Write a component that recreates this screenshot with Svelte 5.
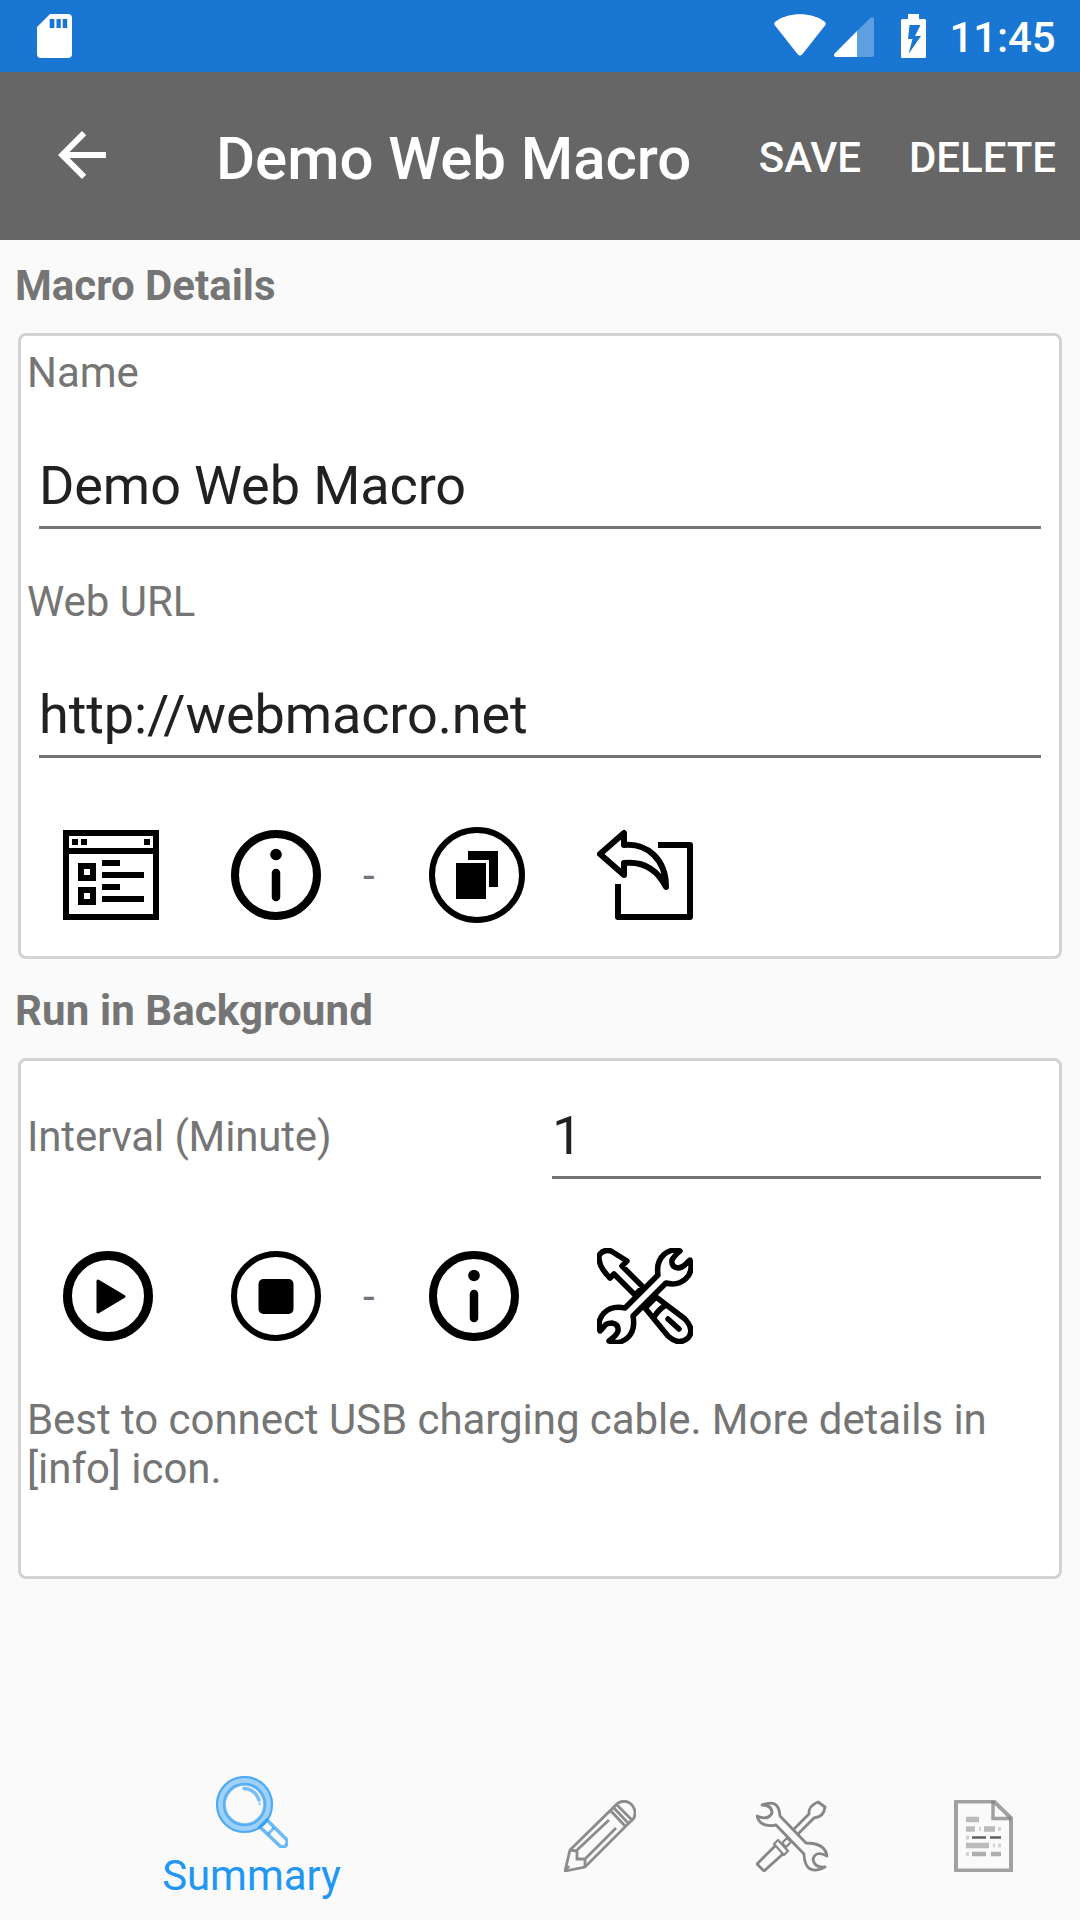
<script lang="ts">
    let name: string = "Demo Web Macro";
    let url: string = "http://webmacro.net";
    let interval: string = "1";
    let activeTab: string = "summary";

    /**
     * Switch the tab shown in the bottom bar
     */
    function selectTab(tab: string): void {
        activeTab = tab;
    }
</script>

{#snippet infoIcon()}
    <svg width="90" height="90" viewBox="0 0 90 90">
        <circle cx="45" cy="45" r="41" fill="none" stroke="#000" stroke-width="8" />
        <circle cx="45" cy="24.500" r="5.800" />
        <path d="M45 43v24" stroke="#000" stroke-width="8.500" stroke-linecap="round" />
    </svg>
{/snippet}

<div class="screen">
    <div class="status-bar">
        <svg class="sd" width="35" height="44" viewBox="0 0 35 44">
            <path fill="#fff" fill-rule="evenodd" d="M13 0H31a4 4 0 0 1 4 4V40a4 4 0 0 1-4 4H4a4 4 0 0 1-4-4V13ZM12.700 5v9h4.700V5ZM19.500 5v9h4.300V5ZM25.700 5v9h4.500V5Z" />
        </svg>
        <svg class="wifi" width="52" height="42" viewBox="0 0 52 42">
            <path fill="#fff" d="M1 8C14-2.300 38-2.300 51 8Q52.500 9.500 51 11.500L28.500 40Q26 43 23.500 40L1 11.500Q-.5 9.500 1 8Z" />
        </svg>
        <svg class="signal" width="40" height="40" viewBox="0 0 40 40">
            <path fill="#fff" fill-opacity=".3" d="M23 14 36.500.7Q40-1 40 2.500V38a2 2 0 0 1-2 2H23Z" />
            <path fill="#fff" d="M23 14V40H2Q-1.500 39 .7 36.500Z" />
        </svg>
        <svg class="battery" width="25" height="44" viewBox="0 0 25 44">
            <path fill="#fff" fill-rule="evenodd" d="M7 0H18V5H23.500Q25 5 25 6.500V42.500Q25 44 23.500 44H1.500Q0 44 0 42.500V6.500Q0 5 1.500 5H7ZM8.500 11 7 25h4.500L7.500 40 20 22h-6l5.500-11Z" />
        </svg>
        <span class="clock">11:45</span>
    </div>

    <header class="toolbar">
        <svg class="back" width="72" height="72" viewBox="0 0 24 24">
            <path fill="#fff" d="M20 11H7.830l5.590-5.590L12 4l-8 8 8 8 1.410-1.410L7.830 13H20v-2z" />
        </svg>
        <h1>Demo Web Macro</h1>
        <button class="action">SAVE</button>
        <button class="action">DELETE</button>
    </header>

    <main>
        <h2>Macro Details</h2>
        <section class="card details">
            <label for="name">Name</label>
            <input id="name" type="text" bind:value={name} />
            <label for="url">Web URL</label>
            <input id="url" type="text" bind:value={url} />
            <div class="icons">
                <svg width="96" height="96" viewBox="0 0 96 96">
                    <path d="M3 6H93V90H3ZM3 24H93" fill="none" stroke="#000" stroke-width="6" />
                    <path d="M9 12h6v6H9zM18 12h6v6h-6zM81 12h6v6h-6z" />
                    <path d="M18 39h12v12H18zM18 63h12v12H18z" fill="none" stroke="#000" stroke-width="6" />
                    <path d="M39 36h18M39 48h42M39 60h18M39 72h42" stroke="#000" stroke-width="6" />
                </svg>
                {@render infoIcon()}
                <span class="dash">-</span>
                <svg width="96" height="96" viewBox="0 0 96 96">
                    <circle cx="48" cy="48" r="45" fill="none" stroke="#000" stroke-width="6" />
                    <path d="M27 36H57V72H27zM39 24H69V60H60V33H39z" />
                </svg>
                <svg width="96" height="96" viewBox="0 0 96 96" fill="none" stroke="#000" stroke-width="6">
                    <path d="M61 18H93V90H21V57" stroke-linejoin="round" />
                    <path d="M3 27 27 6V18C50 16 69 32 69 60C60 42 46 34 27 36V48Z" stroke-linejoin="round" />
                </svg>
            </div>
        </section>

        <h2 class="second">Run in Background</h2>
        <section class="card background">
            <div class="interval">
                <label for="interval">Interval (Minute)</label>
                <input id="interval" type="text" bind:value={interval} />
            </div>
            <div class="icons">
                <svg width="90" height="90" viewBox="0 0 90 90">
                    <circle cx="45" cy="45" r="40.500" fill="none" stroke="#000" stroke-width="9" />
                    <path d="M35 30 61 45.500 35 61Z" stroke="#000" stroke-width="3" stroke-linejoin="round" />
                </svg>
                <svg width="90" height="90" viewBox="0 0 90 90">
                    <circle cx="45" cy="45" r="42" fill="none" stroke="#000" stroke-width="6" />
                    <rect x="27.500" y="28" width="35" height="35" rx="5" />
                </svg>
                <span class="dash">-</span>
                {@render infoIcon()}
                <svg width="96" height="96" viewBox="0 0 96 96" fill="#fff" stroke="#000" stroke-width="5.500" stroke-linejoin="round">
                    <!-- screwdriver -->
                    <path d="M3 6Q7 1 14 3L30 13 25 18 46 39 38 47 17 26 13 30Q3 20 2.500 13Q1 9 3 6Z" />
                    <path d="M48 60 59 49 88 71Q98 82 91 90Q82 98 71 88Z" />
                    <path d="M57 69Q62 61 69 57M71 71 82 81" stroke-linecap="round" />
                    <!-- wrench -->
                    <path d="M83 3C73-1 58 8 61 27L28 60C9 56-1 70 3 83C8 79 7 75 15 75Q22 76 21 83Q20 87 12 93C24 98 40 89 36 68L69 35C84 39 98 28 93 12C88 16 87 20 81 20Q74 19 75 12Q77 8 83 3Z" />
                </svg>
            </div>
            <p>Best to connect USB charging cable. More details in [info] icon.</p>
        </section>
    </main>

    <nav>
        <button class="tab summary" class:active={activeTab === "summary"} on:click={() => selectTab("summary")}>
            <svg width="72" height="72" viewBox="0 0 72 72" fill="none" stroke="#2196f3">
                <circle cx="28.500" cy="28.500" r="23.500" stroke-width="10" stroke-opacity=".42" />
                <circle cx="28.500" cy="28.500" r="27.500" stroke-width="2.200" stroke-opacity=".65" />
                <circle cx="28.500" cy="28.500" r="20.500" stroke-width="2.500" stroke-opacity=".55" />
                <path d="M28 12.500Q39 13 43 24" stroke-width="3.500" stroke-opacity=".6" stroke-linecap="round" />
                <path d="M42.500 27.800h2" stroke-width="2.500" stroke-opacity=".5" />
                <path d="M44 51 51 44 71 64Q72 69 68 71H65Z" stroke-width="3.500" stroke-opacity=".65" />
                <path d="M52 58 58 52" stroke-width="3" stroke-opacity=".6" />
            </svg>
            <span>Summary</span>
        </button>
        <button class="tab" aria-label="Edit" on:click={() => selectTab("edit")}>
            <svg width="72" height="72" viewBox="0 0 72 72" fill="none" stroke="#8c8c8c" stroke-width="2.800">
                <path d="M1 71 6 50 54 3Q61-1 67 4Q73 10 70 18L21 67Z" />
                <path d="M6 50 13 51V59H21V67M1 71 5 66M46 10 62 27M49 7 65 24M52 4 69 21M12 51 45 20M21 59 52 28" />
            </svg>
        </button>
        <button class="tab" aria-label="Settings" on:click={() => selectTab("settings")}>
            <svg width="72" height="72" viewBox="0 0 72 72" fill="#fafafa" stroke="#868686" stroke-width="2.800" stroke-linejoin="round">
                <path d="M35 32 53 14Q52 6 62 2L69 7Q68 17 58 18L40 36Z" />
                <path d="M26 43 31 38 35 42 30 47Z" stroke-width="2.200" />
                <path d="M20 45 28 53 8 71 1 64Z" />
                <path d="M22 40 32 51 28 55 18 44Z" stroke-width="2.200" />
                <path d="M6 5Q23-2 24 16L50 43Q69 43 71 56Q60 50 57 59Q58 68 69 67Q49 77 48 54L20 25Q4 28 1 16Q12 21 16 13Q16 5 6 5Z" />
            </svg>
        </button>
        <button class="tab" aria-label="Log" on:click={() => selectTab("log")}>
            <svg width="72" height="72" viewBox="0 0 72 72" fill="none" stroke="#7b7b7b">
                <path d="M8 1.500H46L63 18V70.500H8Z" stroke-width="4" stroke-opacity=".7" />
                <path d="M45 1V18.500H63" stroke-width="3.500" stroke-opacity=".7" />
                <path d="M18 19.500H31M18 29H27M36 29H47M18 45.500H41" stroke-width="5.500" stroke-opacity=".5" />
                <path d="M24 54H38M43 54H53" stroke-width="4.500" stroke-opacity=".6" />
                <path d="M24 37.500H38M42 37.500H53" stroke-width="2.500" stroke="#606060" />
                <path d="M18 37.500h3M31 29h2M50 29h3M45 45.500h2M50 45.500h3M18 54h3" stroke-width="4" stroke-opacity=".3" />
            </svg>
        </button>
    </nav>
</div>

<style>
    :global(body) {
        background: #fafafa;
    }

    .screen {
        display: flex;
        flex-direction: column;
        width: 1080px;
        height: 1920px;
        overflow: hidden;
        background: #fafafa;
        color: #757575;
        font: 42px/49px Roboto, sans-serif;
        letter-spacing: -0.05px;
    }

    svg {
        display: block;
        flex: none;
    }

    button {
        border: 0;
        padding: 0;
        background: none;
        font: inherit;
        letter-spacing: inherit;
        color: inherit;
    }

    .status-bar {
        display: flex;
        align-items: flex-start;
        box-sizing: border-box;
        height: 72px;
        padding: 14px 24.5px 0 36.5px;
        background: #1976d2;
        color: #fff;
    }

    .wifi {
        margin-left: auto;
        margin-right: 8px;
    }

    .signal {
        margin-top: 3px;
        margin-right: 27px;
    }

    .battery {
        margin-right: 23px;
    }

    .clock {
        font-weight: 500;
        line-height: 48px;
        letter-spacing: -0.1px;
    }

    .toolbar {
        display: flex;
        align-items: center;
        box-sizing: border-box;
        height: 168px;
        padding: 0 24px 0 46px;
        background: #666;
        color: #fff;
    }

    .back {
        margin-right: 98px;
        margin-bottom: 2px;
    }

    h1 {
        margin: 5px auto 0 0;
        font-size: 60px;
        line-height: 70px;
        font-weight: 500;
    }

    .action {
        margin-top: 2px;
        margin-left: 48px;
        font-weight: 500;
    }

    main {
        flex: 1;
        padding: 21px 18px 0;
    }

    h2 {
        margin: 0 0 23px -3px;
        font-size: 42px;
        line-height: 49px;
        font-weight: 700;
        letter-spacing: 0;
    }

    h2.second {
        margin-top: 27px;
        letter-spacing: 0.12px;
    }

    .card {
        box-sizing: border-box;
        border: 3px solid #d3d3d3;
        border-radius: 8px;
        background: #fff;
        padding: 0 18px 0 6px;
    }

    .details {
        height: 626px;
        padding-top: 12px;
    }

    label {
        display: block;
        height: 49px;
    }

    input {
        display: block;
        box-sizing: border-box;
        width: calc(100% - 12px);
        height: 96px;
        margin: 36px 0 0 12px;
        padding: 12px 0 0;
        border: 0;
        border-bottom: 3px solid #747474;
        border-radius: 0;
        outline: none;
        background: none;
        color: #212121;
        font: 54px/63px Roboto, sans-serif;
        letter-spacing: -0.1px;
    }

    input + label {
        margin-top: 48px;
    }

    .icons {
        display: grid;
        grid-template-columns: 168px 132px 66px 168px 96px;
        align-items: center;
        height: 96px;
        margin: 69px 0 0 36px;
    }

    .background {
        height: 521px;
    }

    .interval {
        display: flex;
        align-items: center;
        height: 118px;
    }

    .interval label {
        flex: none;
        width: 525px;
        margin-top: 33px;
        letter-spacing: -0.15px;
    }

    .interval input {
        flex: 1;
        min-width: 0;
        width: auto;
        margin: 22px 0 0;
    }

    p {
        margin: 51px 0 0;
    }

    nav {
        display: flex;
        align-items: center;
        height: 168px;
    }

    .tab {
        display: flex;
        flex-direction: column;
        align-items: center;
        width: 192px;
    }

    .tab.summary {
        width: 503px;
        margin-right: 1px;
        gap: 3px;
        padding-top: 3px;
    }

    .active {
        color: #2196f3;
    }
</style>
